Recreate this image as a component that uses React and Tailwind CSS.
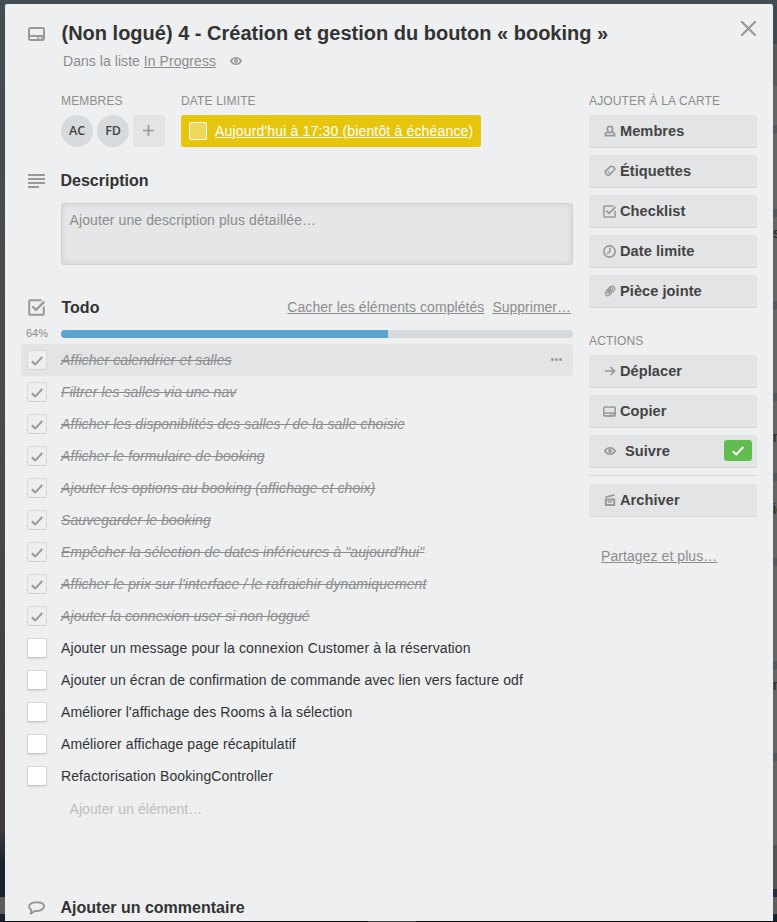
import React from "react";

const CardIcon = ({ className = "" }) => (
  <svg viewBox="0 0 17 14" className={className} fill="none" stroke="#999">
    <rect x="1" y="1" width="15" height="12" rx="1.4" strokeWidth="2" />
    <path d="M1 9H16" strokeWidth="2" />
    <path d="M10.300 9V13M13.800 9V13" strokeWidth="1.600" />
    <path d="M2 12.700H15" strokeWidth="1.200" />
  </svg>
);

const EyeIcon = ({ className = "" }) => (
  <svg viewBox="0 0 12 8" className={className} fill="none" stroke="#999">
    <path d="M.8 4C2.100 1.900 3.900.8 6 .8S9.900 1.900 11.200 4C9.900 6.100 8.100 7.200 6 7.200S2.100 6.100.8 4Z" strokeWidth="1.600" />
    <circle cx="6" cy="4" r="2" fill="#999" stroke="none" />
    <circle cx="6" cy="4" r=".5" fill="#ddd" stroke="none" />
  </svg>
);

const LinesIcon = ({ className = "" }) => (
  <svg viewBox="0 0 17 14" className={className} stroke="#999" strokeWidth="1.800">
    <path d="M0 1H17M0 5H17M0 9H17M0 13H11" />
  </svg>
);

const CheckboxIcon = ({ className = "" }) => (
  <svg viewBox="0 0 17 17" className={className} fill="none" stroke="#999" strokeWidth="2">
    <path d="M13.500 1.200H2.200Q1.200 1.200 1.200 2.200V14.800Q1.200 15.800 2.200 15.800H14.800Q15.800 15.800 15.800 14.800V7.500" />
    <path d="M4.300 7.200L8 10.800L16.300 2.600" strokeWidth="2.300" />
  </svg>
);

const SpeechIcon = ({ className = "" }) => (
  <svg viewBox="0 0 17 14" className={className} fill="none" stroke="#999" strokeWidth="1.900" strokeLinejoin="round">
    <path d="M8.500 1.200C4.500 1.200 1 2.700 1 5.400C1 7 2 8.200 3.300 8.900L2.700 12.600L7 9.900C12 10.300 16 8.300 16 5.300C16 2.500 12.500 1.200 8.500 1.200Z" />
  </svg>
);

const MemberIcon = ({ className = "" }) => (
  <svg viewBox="0 0 12 12" className={className} fill="none" stroke="#999" strokeWidth="1.700">
    <path d="M4.300 6.600C2.400 3.800 3.200 1.400 6 1.400S9.600 3.800 7.700 6.600L10.500 8.500V10.600H1.500V8.500Z" />
    <path d="M3.800 7.700H8.200" strokeWidth="1.200" />
  </svg>
);

const TagIcon = ({ className = "" }) => (
  <svg viewBox="0 0 12 12" className={className} fill="none" stroke="#999" strokeWidth="1.600">
    <path d="M1.400 6.200L6.700 1.300L9.300 1.700L10.900 4L5.800 9.700C4.900 10.700 1.200 10.600 1.400 6.200Z" />
    <path d="M3.600 6.200L5.900 8.600" strokeWidth="1.300" />
  </svg>
);

const ClockIcon = ({ className = "" }) => (
  <svg viewBox="0 0 12 12" className={className} fill="none" stroke="#999" strokeWidth="1.500">
    <circle cx="6" cy="6" r="5.200" />
    <path d="M6.400 2.600V6.200L3.800 8" strokeWidth="1.400" />
  </svg>
);

const ClipIcon = ({ className = "" }) => (
  <svg viewBox="0 0 12 12" className={className} fill="none" stroke="#999" strokeWidth="1.200" strokeLinecap="round">
    <path d="M2.200 5.800L6 2C8.700-.2 12.200 2.600 10.200 5.300L5.600 10C3.500 11.900.4 9.700 1.700 7.300L6.200 3.200C7.800 2 9.400 3.700 8.200 5L4.800 8.400C4.100 9 3.200 8.200 3.800 7.500L6.600 4.800" />
  </svg>
);

const ArrowIcon = ({ className = "" }) => (
  <svg viewBox="0 0 12 12" className={className} fill="none" stroke="#999" strokeWidth="1.700">
    <path d="M.8 6H10.500M6.500 2L10.500 6L6.500 10" />
  </svg>
);

const ArchiveIcon = ({ className = "" }) => (
  <svg viewBox="0 0 12 12" className={className} fill="none" stroke="#999" strokeWidth="1.700">
    <path d="M1.200 3.300L10.500.9" />
    <path d="M1.900 5.400H10.200V11H1.900Z" strokeWidth="2" />
    <path d="M4 7.800H8" strokeWidth="1.500" />
  </svg>
);

const CheckMark = ({ className = "" }) => (
  <svg viewBox="0 0 12 10" className={className} fill="none" stroke="currentColor" strokeWidth="1.900">
    <path d="M.8 5.200L4.300 8.500L11.300 1" />
  </svg>
);

const doneItems = [
  "Afficher calendrier et salles",
  "Filtrer les salles via une nav",
  "Afficher les disponiblités des salles / de la salle choisie",
  "Afficher le formulaire de booking",
  "Ajouter les options au booking (affichage et choix)",
  "Sauvegarder le booking",
  "Empêcher la sélection de dates inférieures à \"aujourd'hui\"",
  "Afficher le prix sur l'interface / le rafraichir dynamiquement",
  "Ajouter la connexion user si non loggué",
];

const openItems = [
  "Ajouter un message pour la connexion Customer à la réservation",
  "Ajouter un écran de confirmation de commande avec lien vers facture odf",
  "Améliorer l'affichage des Rooms à la sélection",
  "Améliorer affichage page récapitulatif",
  "Refactorisation BookingController",
];

function SideButton({ icon, label, wide, children }) {
  return (
    <div className="flex h-[33px] shrink-0 items-center rounded-[3px] border-b border-[#d3d6d8] bg-[#e2e4e6] pl-[14px] pr-[5px]">
      <span className="flex w-[13px] justify-center">{icon}</span>
      <span className={`${wide ? "ml-[9px]" : "ml-1"} flex-1 text-[14.6px] leading-5 font-bold tracking-[0.05px] text-[#444]`}>{label}</span>
      {children}
    </div>
  );
}

function Label({ children }) {
  return <div className="h-6 text-[12px] leading-5 tracking-[0.15px] whitespace-nowrap text-[#8c8c8c]">{children}</div>;
}

function Done({ text, active }) {
  return (
    <div className={`flex h-8 items-center rounded-[3px] pl-[6px] ${active ? "bg-[#e2e4e6]" : ""}`}>
      <span className="flex size-5 items-center justify-center rounded-[3px] border border-[#d6dadc] border-b-[#cdd2d4] bg-[#edeff0]">
        <CheckMark className="mt-px h-[10px] w-3 text-[#999]" />
      </span>
      <span className="ml-[14px] flex-1 text-[14px] leading-5 tracking-[0.09px] whitespace-nowrap text-[#8c8c8c] italic line-through">{text}</span>
      {active && (
        <span className="mr-[11px] mb-[2px] flex gap-px">
          <i className="size-[3px] rounded-full bg-[#999]" />
          <i className="size-[3px] rounded-full bg-[#999]" />
          <i className="size-[3px] rounded-full bg-[#999]" />
        </span>
      )}
    </div>
  );
}

function Open({ text }) {
  return (
    <div className="flex h-8 items-center pl-[6px]">
      <span className="size-5 rounded-[3px] border border-[#d6dadc] border-b-[#c4c9cc] bg-white shadow-[0_1px_2px_rgba(0,0,0,0.12)]" />
      <span className="ml-[14px] text-[14px] leading-5 tracking-[0.105px] whitespace-nowrap text-[#333]">{text}</span>
    </div>
  );
}

export default function App() {
  return (
    <div className="flex h-[922px] w-[777px] flex-col overflow-hidden bg-[#434b53] font-['Liberation_Sans',Arial,sans-serif]">
      <div className="h-1 shrink-0" />
      <div className="flex h-[917px] shrink-0">
        <div className="flex w-[5px] shrink-0 flex-col">
          <div className="h-[826px] bg-linear-to-b from-[#434b53] via-[#4c4a49] to-[#3e3a3d]" />
          <div className="h-[34px] bg-linear-to-b from-[#3e3a3d] to-[#172330]" />
          <div className="h-[33px] bg-[#172330]" />
          <div className="h-[17px] bg-[#5d5d5d]" />
          <div className="flex-1 bg-[#172330]" />
        </div>

        <div className="flex w-[768px] shrink-0 flex-col overflow-hidden rounded-t-[2px] bg-[#edeff0]">
          <header className="flex h-[87px] shrink-0 pl-[23px] pr-[17px]">
            <CardIcon className="mt-[23px] h-[14px] w-[17px]" />
            <div className="ml-4 flex-1">
              <h1 className="mt-[17px] pl-[0.5px] text-[20px] leading-6 font-bold whitespace-nowrap text-[#333]">
                (Non logué) 4 - Création et gestion du bouton « booking »
              </h1>
              <div className="mt-[6px] flex items-center pl-[2px] text-[14px] leading-5 tracking-[0.05px] whitespace-nowrap text-[#8c8c8c]">
                <span>
                  Dans la liste <span className="underline">In Progress</span>
                </span>
                <EyeIcon className="ml-[14px] h-2 w-3" />
              </div>
            </div>
            <svg viewBox="0 0 15 15" className="mt-[17px] size-[15px]" stroke="#999" strokeWidth="2.200" strokeLinecap="round">
              <path d="M1 1L14 14M14 1L1 14" />
            </svg>
          </header>

          <div className="flex flex-1 gap-4 pl-4">
            <main className="flex w-[552px] shrink-0 flex-col">
              <div className="flex h-[68px] gap-4 pl-10">
                <div className="w-[104px]">
                  <Label>MEMBRES</Label>
                  <div className="flex gap-1 font-['Open_Sans',sans-serif] text-[12.5px] font-semibold tracking-[-0.2px] text-[#444]">
                    <span className="flex size-8 items-center justify-center rounded-full bg-[#d6dadc]">AC</span>
                    <span className="flex size-8 items-center justify-center rounded-full bg-[#d6dadc]">FD</span>
                    <span className="flex size-8 items-center justify-center rounded-[3px] bg-[#e2e4e6]">
                      <svg viewBox="0 0 11 11" className="mr-px mb-px size-[11px]" stroke="#999" strokeWidth="1.700">
                        <path d="M5.500 0V11M0 5.500H11" />
                      </svg>
                    </span>
                  </div>
                </div>
                <div>
                  <Label>DATE LIMITE</Label>
                  <div className="flex h-8 w-[300px] items-center rounded-[3px] bg-[#e6c60d] pl-2">
                    <span className="size-[18px] rounded-[2px] border border-white bg-[#eed75b]" />
                    <span className="ml-2 text-[14px] tracking-[0.165px] whitespace-nowrap text-white underline">Aujourd'hui à 17:30 (bientôt à échéance)</span>
                  </div>
                </div>
              </div>

              <section className="mt-3 h-[103px] shrink-0">
                <h3 className="flex h-5 items-center pl-[7px] text-[16px] font-bold text-[#333]">
                  <LinesIcon className="mr-[15.5px] h-[14px] w-[17px]" />
                  Description
                </h3>
                <div className="mt-3 ml-10 h-[62px] rounded-[3px] border border-[#cfd2d4] bg-[#e4e6e8] px-[7.5px] py-[6px] text-[14px] leading-5 tracking-[0.1px] text-[#8c8c8c] shadow-[inset_0_0_6px_rgba(0,0,0,0.1)]">
                  Ajouter une description plus détaillée…
                </div>
              </section>

              <section className="mt-[23px]">
                <div className="flex h-5 items-center pl-[7px] pr-[2px]">
                  <CheckboxIcon className="mr-[16.5px] size-[17px]" />
                  <h3 className="mt-[2px] flex-1 text-[16px] font-bold text-[#333]">Todo</h3>
                  <span className="mr-2 text-[14px] tracking-[0.06px] whitespace-nowrap text-[#8c8c8c] underline">Cacher les éléments complétés</span>
                  <span className="text-[14px] whitespace-nowrap text-[#8c8c8c] underline">Supprimer…</span>
                </div>
                <div className="mt-[9px] flex h-4 items-center">
                  <span className="mb-px w-10 pl-[5px] text-[11px] text-[#8c8c8c]">64%</span>
                  <div className="h-2 flex-1 overflow-hidden rounded-full bg-[#d6dadc]">
                    <div className="h-2 w-[327px] bg-[#5ba4cf]" />
                  </div>
                </div>
                <div className="mt-[2px]">
                  {doneItems.map((text, i) => (
                    <Done key={text} text={text} active={i === 0} />
                  ))}
                  {openItems.map((text) => (
                    <Open key={text} text={text} />
                  ))}
                </div>
                <div className="mt-[7px] pl-[48.5px] text-[14px] leading-5 tracking-[0.07px] text-[#bdbdbd]">Ajouter un élément…</div>
              </section>

              <h3 className="mt-[79px] flex h-5 items-center pl-[7px] text-[16px] font-bold text-[#333]">
                <SpeechIcon className="mr-[15.5px] h-[14px] w-[17px]" />
                Ajouter un commentaire
              </h3>
            </main>

            <aside className="flex w-[168px] shrink-0 flex-col">
              <Label>AJOUTER À LA CARTE</Label>
              <div className="flex flex-col gap-[7px]">
                <SideButton icon={<MemberIcon className="size-3" />} label="Membres" />
                <SideButton icon={<TagIcon className="size-3" />} label="Étiquettes" />
                <SideButton icon={<CheckboxIcon className="size-[13px]" />} label="Checklist" />
                <SideButton icon={<ClockIcon className="size-[13px]" />} label="Date limite" />
                <SideButton icon={<ClipIcon className="size-3" />} label="Pièce jointe" />
              </div>
              <div className="mt-[23px] flex flex-col">
                <Label>ACTIONS</Label>
                <div className="flex flex-col gap-[7px]">
                  <SideButton icon={<ArrowIcon className="size-3" />} label="Déplacer" />
                  <SideButton icon={<CardIcon className="h-[11px] w-[13px]" />} label="Copier" />
                  <SideButton icon={<EyeIcon className="h-2 w-3" />} label="Suivre" wide>
                    <span className="mb-px flex h-[21px] w-7 items-center justify-center rounded-[3px] bg-[#61bd4f]">
                      <CheckMark className="mt-px h-[10px] w-3 text-white" />
                    </span>
                  </SideButton>
                </div>
                <hr className="mt-[7px] mb-2 border-[#d6dadc]" />
                <SideButton icon={<ArchiveIcon className="size-3" />} label="Archiver" />
              </div>
              <div className="mt-[29px] pl-3 text-[14px] leading-5 tracking-[0.07px] text-[#8c8c8c] underline">Partagez et plus…</div>
            </aside>
          </div>
        </div>

        <div className="flex w-1 shrink-0 flex-col overflow-hidden bg-[#656565] text-[14px] leading-4 text-[#202020]">
          <div className="h-10 shrink-0 bg-[#414a53]" />
          <div className="h-[42px] shrink-0 bg-[#585858]" />
          <div className="h-[39px] shrink-0 bg-[#656565]" />
          <div className="h-2 shrink-0 bg-[#55585b]" />
          <div className="h-[76px] shrink-0" />
          <div className="h-2 shrink-0 bg-[#55585b]" />
          <div className="h-[84px] shrink-0 pt-2">s</div>
          <div className="h-2 shrink-0 bg-[#55585b]" />
          <div className="h-[84px] shrink-0" />
          <div className="h-2 shrink-0 bg-[#55585b]" />
          <div className="h-[72px] shrink-0 pt-[28px]">n</div>
          <div className="h-2 shrink-0 bg-[#55585b]" />
          <div className="h-[77px] shrink-0 pt-[20px]">ic</div>
          <div className="h-2 shrink-0 bg-[#55585b]" />
          <div className="h-[95px] shrink-0" />
          <div className="h-2 shrink-0 bg-[#55585b]" />
          <div className="h-[84px] shrink-0 pt-2">n</div>
          <div className="h-2 shrink-0 bg-[#55585b]" />
          <div className="h-[84px] shrink-0" />
          <div className="h-11 shrink-0 bg-[#555]" />
          <div className="h-2 shrink-0 bg-[#222e3d]" />
          <div className="h-[17px] shrink-0 bg-[#5d5d5d]" />
          <div className="flex-1 bg-[#172330]" />
        </div>
      </div>
      <div className="flex h-px shrink-0 bg-[#0c0f13] pl-[368px]">
        <div className="w-12 bg-[#444]" />
      </div>
    </div>
  );
}
